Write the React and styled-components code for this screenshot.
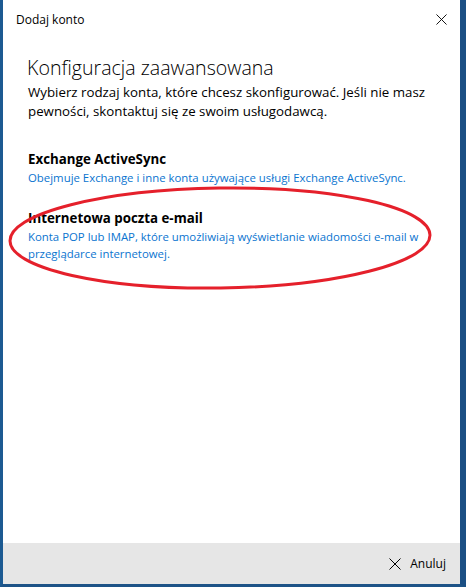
import React from "react";
import styled, { createGlobalStyle } from "styled-components";

const GlobalStyle = createGlobalStyle`
  html, body {
    margin: 0;
    padding: 0;
    background: #1d5387;
  }
  body {
    font-family: "Open Sans", "Noto Sans", sans-serif;
  }
`;

// dialog window with the blue desktop frame around it
const Window = styled.div`
  box-sizing: border-box;
  width: 466px;
  height: 587px;
  border-left: 3px solid #1c5a92;
  border-right: 6px solid #1b4f84;
  border-bottom: 3px solid #1d5387;
  background: #ffffff;
  display: flex;
  flex-direction: column;
  position: relative;
`;

const TitleBar = styled.div`
  height: 38px;
  display: flex;
  align-items: center;
  justify-content: space-between;
  padding: 0 13px 0 13px;
  font-size: 12px;
  color: #000;
`;

const CloseButton = styled.div`
  display: flex;
  align-items: center;
  color: #000;
`;

const Content = styled.div`
  flex: 1;
  padding: 17px 20px 0 25px;
`;

const Heading = styled.h1`
  margin: 0 0 0 -1px;
  font-size: 19.6px;
  font-weight: 300;
  color: #000;
  line-height: 26px;
`;

const Intro = styled.p`
  margin: 2px 0 0 0;
  font-size: 13.3px;
  line-height: 19px;
  color: #000;
`;

const Options = styled.div`
  margin-top: 29px;
  display: flex;
  flex-direction: column;
  gap: 23px;
`;

const Option = styled.div`
  display: flex;
  flex-direction: column;
`;

const OptionTitle = styled.div`
  font-size: 13.3px;
  font-weight: 700;
  line-height: 19px;
  color: #000;
`;

const OptionText = styled.div`
  font-size: 11.4px;
  line-height: 17px;
  color: #0a74cf;
`;

const Footer = styled.div`
  height: 41px;
  background: #e6e6e6;
  display: flex;
  align-items: center;
  justify-content: flex-end;
  padding-right: 14px;
  gap: 9px;
  font-size: 12px;
  color: #000;
`;

const Annotation = styled.svg`
  position: absolute;
  left: 0;
  top: 0;
  pointer-events: none;
`;

const Cross = ({ size = 12 }) => (
  <svg width={size} height={size} viewBox="0 0 12 12">
    <path d="M0.5 0.5 L11.5 11.5 M11.5 0.5 L0.5 11.5" stroke="#000" strokeWidth="1" fill="none" />
  </svg>
);

export default function App() {
  return (
    <>
      <GlobalStyle />
      <Window>
        <TitleBar>
          <span>Dodaj konto</span>
          <CloseButton>
            <Cross size={11} />
          </CloseButton>
        </TitleBar>
        <Content>
          <Heading>Konfiguracja zaawansowana</Heading>
          <Intro>
            Wybierz rodzaj konta, które chcesz skonfigurować. Jeśli nie masz
            pewności, skontaktuj się ze swoim usługodawcą.
          </Intro>
          <Options>
            <Option>
              <OptionTitle>Exchange ActiveSync</OptionTitle>
              <OptionText>
                Obejmuje Exchange i inne konta używające usługi Exchange ActiveSync.
              </OptionText>
            </Option>
            <Option>
              <OptionTitle>Internetowa poczta e-mail</OptionTitle>
              <OptionText>
                Konta POP lub IMAP, które umożliwiają wyświetlanie wiadomości e-mail w
                przeglądarce internetowej.
              </OptionText>
            </Option>
          </Options>
        </Content>
        <Footer>
          <Cross size={12} />
          <span>Anuluj</span>
        </Footer>
        <Annotation width="466" height="587">
          <ellipse cx="217" cy="238" rx="210" ry="50" fill="none" stroke="#e5202b" strokeWidth="3" transform="rotate(-0.8 217 238)" />
        </Annotation>
      </Window>
    </>
  );
}
